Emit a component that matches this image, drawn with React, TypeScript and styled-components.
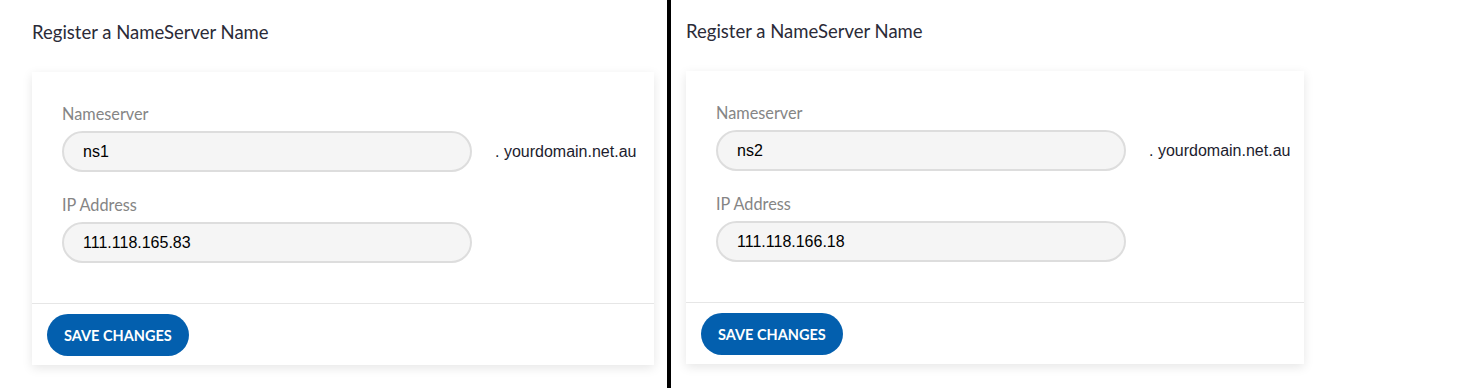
import React from 'react'
import styled, { createGlobalStyle } from 'styled-components'

const GlobalStyle = createGlobalStyle`
	html, body {
		margin: 0;
		padding: 0;
		background: #ffffff;
	}
`

interface Entry {
	host: string
	ip: string
}

const entries: Entry[] = [
	{ host: 'ns1', ip: '111.118.165.83' },
	{ host: 'ns2', ip: '111.118.166.18' },
]

const NameServerForm: React.FC<{ entry: Entry, cardWidth: number }> = ({ entry, cardWidth }) => {
	return (
		<>
			<Title>{'Register a NameServer Name'}</Title>
			<Card $width={cardWidth}>
				<CardBody>
					<Label>{'Nameserver'}</Label>
					<Row>
						<Input defaultValue={entry.host} />
						<Suffix>{'. yourdomain.net.au'}</Suffix>
					</Row>
					<Label $gap>{'IP Address'}</Label>
					<Row>
						<Input defaultValue={entry.ip} />
					</Row>
				</CardBody>
				<CardFooter>
					<Button type="button">{'SAVE CHANGES'}</Button>
				</CardFooter>
			</Card>
		</>
	)
}

export default function App() {
	return (
		<>
			<GlobalStyle />
			<Page>
				<Panel $width={667} $left={32} $top={18}>
					<NameServerForm entry={entries[0]} cardWidth={622} />
				</Panel>
				<Separator />
				<Panel $width={790} $left={15} $top={17}>
					<NameServerForm entry={entries[1]} cardWidth={618} />
				</Panel>
			</Page>
		</>
	)
}

const Page = styled.div`
	display: flex;
	height: 388px;
	width: 1461px;
	overflow: hidden;
`

interface PanelProps {
	$width: number
	$left: number
	$top: number
}
const Panel = styled.div<PanelProps>`
	width: ${props => props.$width}px;
	flex-shrink: 0;
	box-sizing: border-box;
	padding: ${props => props.$top}px 0 0 ${props => props.$left}px;
	display: flex;
	flex-direction: column;
	align-items: flex-start;
`

const Separator = styled.div`
	width: 4px;
	flex-shrink: 0;
	background: #000000;
`

const Title = styled.h2`
	margin: 0 0 26px;
	font-family: Lato, 'Open Sans', sans-serif;
	font-weight: 400;
	font-size: 18.5px;
	line-height: 28px;
	color: #2b2b38;
`

const Card = styled.div<{ $width: number }>`
	width: ${props => props.$width}px;
	background: #ffffff;
	box-shadow: 0 3px 10px rgba(0, 0, 0, 0.1);
`

const CardBody = styled.div`
	padding: 31px 30px 40px;
	display: flex;
	flex-direction: column;
`

const Label = styled.label<{ $gap?: boolean }>`
	margin-top: ${props => props.$gap ? 22 : 0}px;
	margin-bottom: 7px;
	font-family: Lato, 'Open Sans', sans-serif;
	font-size: 16.3px;
	line-height: 21px;
	color: #858585;
`

const Row = styled.div`
	display: flex;
	align-items: center;
	gap: 23px;
`

const Input = styled.input`
	flex: 0 0 410px;
	width: 410px;
	height: 41px;
	box-sizing: border-box;
	border: 2px solid #dddddd;
	border-radius: 21px;
	background: #f5f5f5;
	padding: 0 19px;
	font-family: 'Liberation Sans', Arial, sans-serif;
	font-size: 16px;
	color: #000000;
	outline: none;
`

const Suffix = styled.span`
	white-space: nowrap;
	font-family: 'Liberation Sans', Arial, sans-serif;
	font-size: 16px;
	color: #1c1c2e;
`

const CardFooter = styled.div`
	border-top: 1px solid #e6e6e6;
	padding: 10px 15px 9px;
	display: flex;
`

const Button = styled.button`
	height: 42px;
	padding: 0 17px;
	border: none;
	border-radius: 21px;
	background: #035fae;
	color: #ffffff;
	font-family: Lato, 'Open Sans', sans-serif;
	font-weight: 700;
	font-size: 14.5px;
	cursor: pointer;
`
